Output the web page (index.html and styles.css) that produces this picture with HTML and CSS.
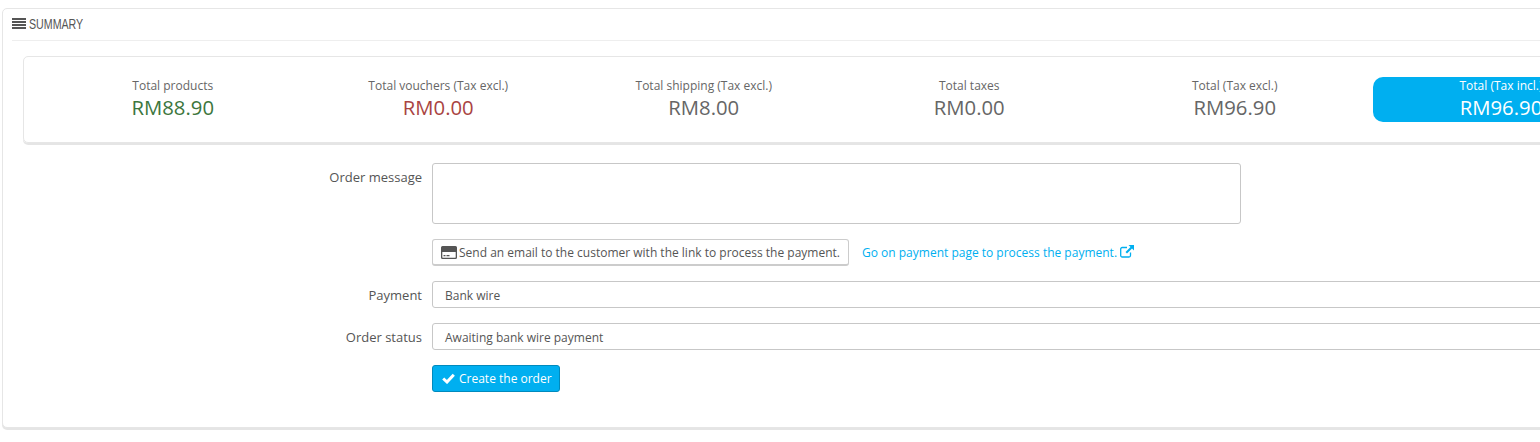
FILE: index.html
```html
<!DOCTYPE html>
<html>
<head>
    <title>Summary</title>
    <link rel="stylesheet" href="styles.css">
</head>
<body>
    <div class="panel">
        <div class="panel-heading">
            <svg class="icon-list" width="14" height="11" viewBox="0 0 14 11"><path d="M0 0h14v2H0zM0 3h14v2H0zM0 6h14v2H0zM0 9h14v2H0z" fill="#555"/></svg>
            <span class="heading-text">SUMMARY</span>
        </div>

        <div class="totals">
            <div class="total">
                <span class="total-label">Total products</span>
                <span class="total-value green">RM88.90</span>
            </div>
            <div class="total">
                <span class="total-label">Total vouchers (Tax excl.)</span>
                <span class="total-value red">RM0.00</span>
            </div>
            <div class="total">
                <span class="total-label">Total shipping (Tax excl.)</span>
                <span class="total-value">RM8.00</span>
            </div>
            <div class="total">
                <span class="total-label">Total taxes</span>
                <span class="total-value">RM0.00</span>
            </div>
            <div class="total">
                <span class="total-label">Total (Tax excl.)</span>
                <span class="total-value">RM96.90</span>
            </div>
            <div class="total total-final">
                <span class="total-label">Total (Tax incl.)</span>
                <span class="total-value">RM96.90</span>
            </div>
        </div>

        <form class="order-form">
            <label class="form-label label-message">Order message</label>
            <textarea class="message"></textarea>

            <div class="form-actions">
                <button type="button" class="btn-default">
                    <svg width="16" height="13" viewBox="0 0 16 13"><path fill-rule="evenodd" d="M1.500 0h13A1.500 1.500 0 0 1 16 1.500v10a1.500 1.500 0 0 1-1.500 1.500h-13A1.500 1.500 0 0 1 0 11.500v-10A1.500 1.500 0 0 1 1.500 0zM1.300 6v5.300a.4.4 0 0 0 .4.4h12.600a.4.4 0 0 0 .4-.4V6zM2.500 9h2v1.200h-2zM5.500 9h3v1.200h-3z" fill="#555"/></svg>
                    Send an email to the customer with the link to process the payment.
                </button>
                <a class="pay-link" href="#">Go on payment page to process the payment.
                    <svg class="icon-external" width="14" height="13" viewBox="0 0 14 13"><path d="M10.500 7.500v3a1.500 1.500 0 0 1-1.500 1.500H2.200A1.500 1.500 0 0 1 .7 10.500V4A1.500 1.500 0 0 1 2.200 2.500H7" fill="none" stroke="#00aff0" stroke-width="1.300"/><path d="M8.500 0H14v5.500l-2-2L7 8.500 5.500 7l5-5z" fill="#00aff0"/></svg>
                </a>
            </div>

            <label class="form-label">Payment</label>
            <div class="select">Bank wire</div>

            <label class="form-label">Order status</label>
            <div class="select">Awaiting bank wire payment</div>

            <div class="form-submit">
                <button type="button" class="btn-primary">
                    <svg width="13" height="11" viewBox="0 0 13 11"><path d="M1.200 5.500l3.800 3.500L11.800 1.800" fill="none" stroke="#fff" stroke-width="3"/></svg>
                    Create the order
                </button>
            </div>
        </form>
    </div>
</body>
</html>
```

FILE: styles.css
```css
html, body {
    height: 442px;
    overflow: hidden;
}
body {
    margin: 0;
    padding: 8px 0 0 2px;
    background: #fff;
    font-family: "Open Sans", Arial, sans-serif;
    font-size: 12px;
    color: #555;
}
.panel {
    box-sizing: border-box;
    width: 1640px;
    height: 420px;
    padding: 0 20px;
    background: #fff;
    border: 1px solid #e6e6e6;
    border-radius: 5px;
    box-shadow: 0 2px 0 rgba(0, 0, 0, 0.1);
}
.panel-heading {
    display: flex;
    align-items: center;
    gap: 3px;
    height: 32px;
    margin: 0 -11px 15px -11px;
    padding: 0 0 2px;
    box-sizing: border-box;
    border-bottom: 1px solid #eee;
    font-family: "Liberation Sans", Arial, sans-serif;
    font-size: 14px;
    color: #555;
}
.heading-text {
    transform: scaleX(0.76);
    transform-origin: left center;
}
.totals {
    display: flex;
    box-sizing: border-box;
    height: 87px;
    padding: 20px 0 0 16px;
    border: 1px solid #e6e6e6;
    border-radius: 5px;
    box-shadow: 0 2px 0 rgba(0, 0, 0, 0.1);
}
.total {
    display: flex;
    flex: none;
    flex-direction: column;
    align-items: center;
    box-sizing: border-box;
    width: 265.500px;
    height: 45px;
    color: #666;
}
.total-label {
    font-size: 12px;
    line-height: 17px;
}
.total-value {
    font-size: 20.300px;
    line-height: 27px;
}
.green {
    color: #3c763d;
}
.red {
    color: #a94442;
}
.total-final {
    width: 257px;
    margin-left: 5px;
    background: #00aff0;
    border-radius: 10px;
    color: #fff;
}
.order-form {
    display: grid;
    grid-template-columns: 399px 1fr;
    column-gap: 10px;
    margin-top: 20px;
}
.form-label {
    font-size: 13px;
    line-height: 29px;
    text-align: right;
    margin-bottom: 13px;
}
.label-message {
    margin-bottom: 0;
}
.message {
    display: block;
    box-sizing: border-box;
    width: 809px;
    height: 61px;
    margin: 0 0 15px;
    background: #fff;
    border: 1px solid #c7c7c7;
    border-radius: 3px;
    resize: none;
}
.form-actions {
    grid-column: 2;
    display: flex;
    align-items: center;
    gap: 13px;
    margin-bottom: 15px;
}
.btn-default {
    display: flex;
    align-items: center;
    gap: 2px;
    box-sizing: border-box;
    width: 417px;
    height: 27px;
    padding: 0 0 0 8px;
    background: #fff;
    border: 1px solid #ccc;
    border-bottom-width: 2px;
    border-radius: 3px;
    font-family: inherit;
    font-size: 12px;
    color: #555;
    white-space: nowrap;
}
.pay-link {
    display: flex;
    align-items: center;
    gap: 3px;
    color: #00aff0;
    text-decoration: none;
    white-space: nowrap;
}
.icon-external {
    margin-bottom: 3px;
}
.select {
    box-sizing: border-box;
    width: 1140px;
    height: 27px;
    margin-bottom: 15px;
    padding-left: 12px;
    background: #fff;
    border: 1px solid #c7c7c7;
    border-radius: 3px;
    line-height: 27px;
}
.form-submit {
    grid-column: 2;
}
.btn-primary {
    display: flex;
    align-items: center;
    gap: 4px;
    box-sizing: border-box;
    width: 128px;
    height: 27px;
    padding: 0 0 0 9px;
    background: #00aff0;
    border: 1px solid #008abd;
    border-radius: 3px;
    font-family: inherit;
    font-size: 12px;
    color: #fff;
    white-space: nowrap;
}
```
